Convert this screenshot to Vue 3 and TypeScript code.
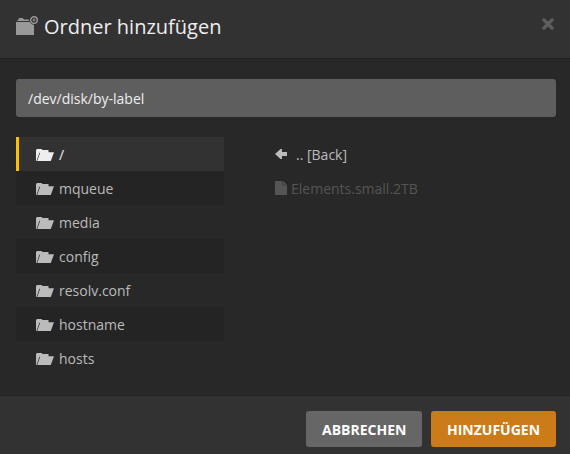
<script setup lang="ts">
import { ref } from 'vue'

const path = ref<string>('/dev/disk/by-label')
const roots: string[] = ['/', 'mqueue', 'media', 'config', 'resolv.conf', 'hostname', 'hosts']
const selected = ref<number>(0)
</script>

<template>
  <div class="modal">
    <header class="modal-header">
      <svg class="title-icon" width="22" height="20" viewBox="0 0 22 20">
        <path d="M0 6H13.8Q15 8.8 18 9V19H0ZM0.6 5L2.6 3.6V3Q2.6 2 3.6 2H6.6L8 3.6H12.6L13.4 5Z" />
        <circle class="badge" cx="18" cy="4" r="3.3" />
        <path d="M17.5 2.5H18.5V3.5H19.5V4.5H18.5V5.5H17.5V4.5H16.5V3.5H17.5Z" />
      </svg>
      <h4 class="title">Ordner hinzufügen</h4>
      <button class="close" type="button" aria-label="Schließen">
        <svg width="12" height="12" viewBox="0 0 12 12"><path d="M2 2L10 10M10 2L2 10" /></svg>
      </button>
    </header>

    <main class="modal-body">
      <input v-model="path" class="path" type="text" spellcheck="false" />
      <div class="browser">
        <ul class="roots">
          <li
            v-for="(name, i) in roots"
            :key="name"
            class="row"
            :class="{ selected: i === selected }"
            @click="selected = i"
          >
            <svg class="folder" width="18" height="12" viewBox="0 0 18 12">
              <path d="M0 9.5V1L1 0H5.5L6.5 1H12.5V3.2H18L14.8 12H1.2L4.1 3.7H3.4L0.7 11.5V12H0Z" />
            </svg>
            <span>{{ name }}</span>
          </li>
        </ul>
        <ul class="entries">
          <li class="row back">
            <svg width="12" height="10" viewBox="0 0 12 10"><path d="M0 5L5.5 0H7V3H12V7H7V10H5.5Z" /></svg>
            <span>.. [Back]</span>
          </li>
          <li class="row file">
            <svg width="12" height="14" viewBox="0 0 12 14">
              <path d="M0 0H7.5V4.3H12V14H0ZM8 0L12 3.8H8Z" />
            </svg>
            <span>Elements.small.2TB</span>
          </li>
        </ul>
      </div>
    </main>

    <footer class="modal-footer">
      <button class="btn cancel" type="button">Abbrechen</button>
      <button class="btn primary" type="button">Hinzufügen</button>
    </footer>
  </div>
</template>

<style>
body {
  background: #282828;
  overflow: hidden;
}
</style>

<style scoped>
.modal,
.modal * {
  box-sizing: border-box;
}
.modal {
  width: 570px;
  height: 454px;
  display: flex;
  flex-direction: column;
  background: #282828;
  color: #bbb;
  font: 14px/20px "Open Sans", "Noto Sans", sans-serif;
}
.modal-header {
  height: 59px;
  flex: none;
  display: flex;
  align-items: flex-start;
  padding: 16px 15px 0 16px;
  background: #323232;
  border-bottom: 1px solid #222;
}
.title-icon {
  flex: none;
  fill: #999;
}
.title-icon .badge {
  fill: none;
  stroke: #999;
  stroke-width: 1.4;
}
.title {
  margin: -4px 0 0 6px;
  color: #eee;
  font-size: 20px;
  font-weight: 400;
  line-height: 30px;
}
.close {
  margin: 2px 1px 0 auto;
  padding: 0;
  border: 0;
  background: none;
  line-height: 0;
}
.close path {
  stroke: #5e5e5e;
  stroke-width: 3.4;
  stroke-linecap: round;
}
.modal-body {
  flex: 1;
  padding: 20px 14px 0 16px;
}
.path {
  display: block;
  width: 100%;
  height: 38px;
  padding: 0 12px;
  border: 0;
  border-radius: 3px;
  outline: 0;
  background: #5e5e5e;
  color: #eee;
  font: inherit;
}
.browser {
  display: flex;
  gap: 40px;
  margin-top: 20px;
}
ul {
  margin: 0;
  padding: 0;
  list-style: none;
}
.roots {
  width: 208px;
}
.entries {
  flex: 1;
}
.row {
  height: 34px;
  display: flex;
  align-items: center;
  padding-top: 2px;
}
.row svg {
  flex: none;
  fill: currentColor;
}
.roots .row {
  padding-left: 20px;
  gap: 5px;
}
.roots .row:nth-child(even) {
  background: #242424;
}
.roots .row.selected {
  padding-left: 17px;
  border-left: 3px solid #ffbf00;
  background: #323232;
  color: #eee;
}
.entries .row {
  padding-left: 11px;
}
.entries svg {
  margin-bottom: 2px;
}
.back {
  gap: 9px;
}
.file {
  gap: 4px;
  color: #555;
}
.modal-footer {
  height: 59px;
  flex: none;
  display: flex;
  justify-content: flex-end;
  gap: 9px;
  padding: 15px 14px 0 0;
  background: #323232;
  border-top: 1px solid #222;
}
.btn {
  height: 36px;
  padding: 2px 16px 0;
  border: 0;
  border-radius: 3px;
  color: #fff;
  font: 700 14px/34px "Open Sans", "Noto Sans", sans-serif;
  text-transform: uppercase;
}
.cancel {
  width: 116px;
  background: #666;
}
.primary {
  width: 125px;
  background: #cc7b19;
}
</style>
